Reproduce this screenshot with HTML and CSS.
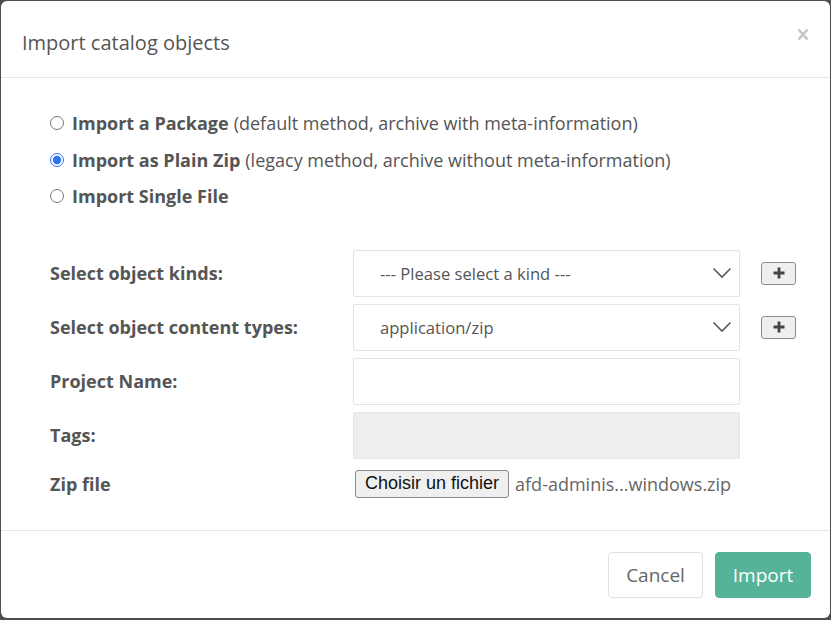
FILE: index.html
```html
<!DOCTYPE html>
<html>
<head>
<meta charset="utf-8">
<link rel="stylesheet" href="styles.css">
</head>
<body>
<div class="modal">
  <div class="modal-header">
    <h4 class="modal-title">Import catalog objects</h4>
    <span class="close" aria-label="Close">
      <svg width="12" height="13" viewBox="0 0 12 13"><path d="M1.5 1.5 L10.5 11.5 M10.5 1.5 L1.5 11.5" stroke="#c4c4c4" stroke-width="2.6" fill="none" stroke-linecap="butt"/></svg>
    </span>
  </div>
  <div class="modal-body">
    <div class="radios">
      <label class="radio"><input type="radio" name="mode"><b>Import a Package</b> (default method, archive with meta-information)</label>
      <label class="radio"><input type="radio" name="mode" checked><b>Import as Plain Zip</b> (legacy method, archive without meta-information)</label>
      <label class="radio"><input type="radio" name="mode"><b>Import Single File</b></label>
    </div>
    <div class="form">
      <div class="label">Select object kinds:</div>
      <div class="select"><span>--- Please select a kind ---</span>
        <svg class="chev" width="20" height="12" viewBox="0 0 20 12"><path d="M1.5 1.5 L10 10 L18.5 1.5" stroke="#5a5a5a" stroke-width="1.6" fill="none"/></svg>
      </div>
      <div class="add"><button class="plus"><svg width="12" height="12" viewBox="0 0 12 12"><path d="M6 0.5 V11.5 M0.5 6 H11.5" stroke="#444" stroke-width="2.8" fill="none"/></svg></button></div>

      <div class="label">Select object content types:</div>
      <div class="select"><span>application/zip</span>
        <svg class="chev" width="20" height="12" viewBox="0 0 20 12"><path d="M1.5 1.5 L10 10 L18.5 1.5" stroke="#5a5a5a" stroke-width="1.6" fill="none"/></svg>
      </div>
      <div class="add"><button class="plus"><svg width="12" height="12" viewBox="0 0 12 12"><path d="M6 0.5 V11.5 M0.5 6 H11.5" stroke="#444" stroke-width="2.8" fill="none"/></svg></button></div>

      <div class="label">Project Name:</div>
      <div class="input"></div>
      <div class="add"></div>

      <div class="label">Tags:</div>
      <div class="input disabled"></div>
      <div class="add"></div>

      <div class="label short">Zip file</div>
      <div class="file"><button class="file-btn">Choisir un fichier</button><span class="file-name">afd-adminis...windows.zip</span></div>
      <div class="add"></div>
    </div>
  </div>
  <div class="modal-footer">
    <button class="btn btn-default">Cancel</button>
    <button class="btn btn-primary">Import</button>
  </div>
</div>
</body>
</html>
```
FILE: styles.css
```css
html, body {
  margin: 0;
  padding: 0;
}
body {
  background: #4e4e4e;
  width: 831px;
  height: 620px;
  overflow: hidden;
  font-family: "Open Sans", "Liberation Sans", sans-serif;
  color: #555;
}
.modal {
  margin: 1px 1px 0 1px;
  width: 829px;
  height: 617px;
  background: #fff;
  border-radius: 6px;
  display: flex;
  flex-direction: column;
  box-sizing: border-box;
}
.modal-header {
  height: 77px;
  box-sizing: border-box;
  border-bottom: 1px solid #e5e5e5;
  padding: 27px 21px 0 21px;
  display: flex;
  justify-content: space-between;
  align-items: flex-start;
}
.modal-title {
  margin: 2px 0 0 0;
  font-size: 20px;
  line-height: 26px;
  font-weight: 400;
  color: #555;
}
.close {
  display: block;
  margin-top: 0;
  line-height: 0;
}
.modal-body {
  padding: 27px 0 28px 49px;
}
.radios {
  display: flex;
  flex-direction: column;
}
.radio {
  height: 36.5px;
  display: flex;
  align-items: center;
  font-size: 18px;
  color: #555;
  white-space: nowrap;
}
.radio b {
  font-weight: 700;
  margin-right: 5px;
}
.radio input {
  margin: 0 8px 0 0;
  width: 14px;
  height: 14px;
  accent-color: #2a74f0;
}
.form {
  margin-top: 35px;
  display: grid;
  grid-template-columns: 303px 387px 57px;
  grid-template-rows: 47px 47px 47px 47px 36px;
  row-gap: 7px;
}
.label {
  font-weight: 700;
  font-size: 18px;
  display: flex;
  align-items: center;
  color: #555;
}
.select, .input {
  border: 1px solid #e3e3e3;
  border-radius: 2px;
  box-sizing: border-box;
  display: flex;
  align-items: center;
  justify-content: space-between;
  padding: 0 7px 0 26px;
  font-size: 16.6px;
  color: #555;
}
.input.disabled {
  background: #eee;
  border-color: #e6e6e6;
}
.add {
  display: flex;
  align-items: center;
  padding-left: 21px;
}
.plus {
  width: 35px;
  height: 23px;
  box-sizing: border-box;
  border: 1px solid #8d8d8d;
  border-radius: 3px;
  background: #efefef;
  padding: 0;
  display: flex;
  align-items: center;
  justify-content: center;
}
.file {
  display: flex;
  align-items: center;
  padding-left: 2px;
}
.file-btn {
  font-family: "Liberation Sans", Arial, sans-serif;
  font-size: 18px;
  color: #111;
  background: #efefef;
  border: 1px solid #8a8a8a;
  border-radius: 3px;
  height: 28px;
  padding: 0 9px;
  margin: 0 6px 0 0;
}
.file-name {
  font-size: 18px;
  color: #666;
  white-space: nowrap;
}
.modal-footer {
  border-top: 1px solid #e5e5e5;
  padding: 21px 19px 0 0;
  display: flex;
  justify-content: flex-end;
  gap: 12px;
}
.btn {
  height: 46px;
  font-family: "Open Sans", "Liberation Sans", sans-serif;
  font-size: 19px;
  border-radius: 4px;
  padding: 0;
  box-sizing: border-box;
}
.btn-default {
  width: 95px;
  background: #fff;
  border: 1px solid #e0e0e0;
  color: #666;
}
.btn-primary {
  width: 96px;
  background: #56b399;
  border: 1px solid #56b399;
  color: #fff;
}
```
